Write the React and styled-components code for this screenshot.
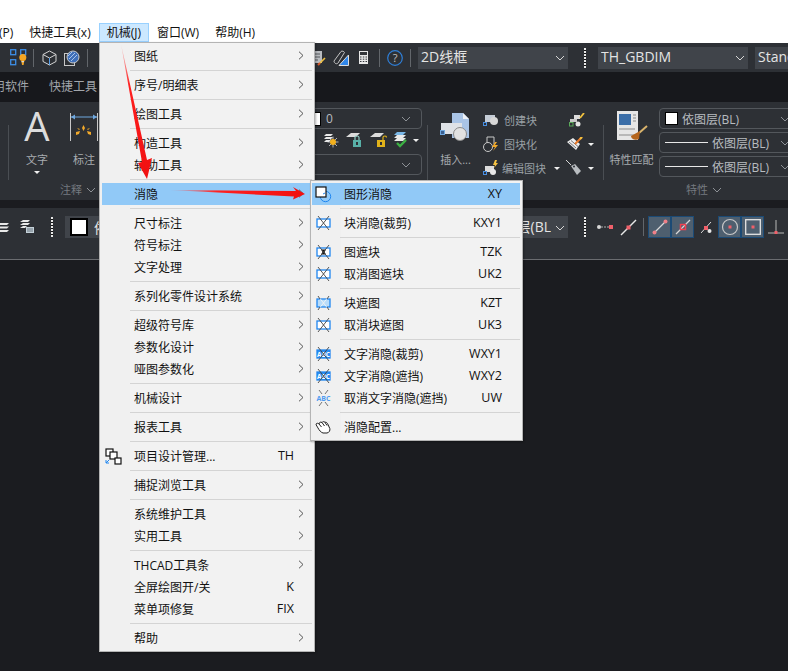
import React from 'react'
import styled, { createGlobalStyle } from 'styled-components'

const GlobalStyle = createGlobalStyle`
  html, body {
    margin: 0;
    padding: 0;
    background: #fff;
  }
  body {
    font-family: "Open Sans", "Noto Sans CJK SC", sans-serif;
    font-size: 12px;
  }
`

const Frame = styled.div`
  position: relative;
  display: flex;
  flex-direction: column;
  width: 788px;
  height: 671px;
  overflow: hidden;
  background: #1b1c20;
`

const MenuBar = styled.div`
  display: flex;
  align-items: flex-end;
  flex: none;
  height: 43px;
  padding-bottom: 1px;
  box-sizing: border-box;
  background: #fff;
`

const MenuTitle = styled.div`
  flex: none;
  height: 19px;
  line-height: 18px;
  padding: 0 7px;
  margin-left: ${props => props.$ml || 0}px;
  box-sizing: border-box;
  color: #111;
  white-space: nowrap;
  border: 1px solid ${props => props.$active ? '#99d1ff' : 'transparent'};
  background: ${props => props.$active ? '#cce8ff' : 'transparent'};
`

const QuickBar = styled.div`
  display: flex;
  align-items: center;
  flex: none;
  height: 29px;
  background: #2d3035;
  overflow: hidden;
`

const Spot = styled.div`
  display: flex;
  align-items: center;
  flex: none;
  margin-left: ${props => props.$ml || 0}px;
`

const ToolSep = styled.div`
  flex: none;
  width: 1px;
  height: 18px;
  margin-left: ${props => props.$ml || 0}px;
  margin-top: ${props => props.$mt || 0}px;
  background: #62666b;
`

const Grip = styled.div`
  flex: none;
  width: 2px;
  height: 20px;
  margin-left: ${props => props.$ml || 0}px;
  margin-top: ${props => props.$mt || 0}px;
  background: repeating-linear-gradient(to bottom, #e8e8e8 0 2px, #111 2px 3px);
`

const DarkCombo = styled.div`
  display: flex;
  align-items: center;
  flex: none;
  width: ${props => props.$w}px;
  height: 22px;
  margin-left: ${props => props.$ml || 0}px;
  padding: 0 0 0 ${props => props.$pl ?? 3}px;
  box-sizing: border-box;
  overflow: hidden;
  background: #40444a;
  color: #e4e4e4;
  font-size: 14px;
  white-space: nowrap;
`

const ComboText = styled.span`
  flex: 1;
  min-width: 0;
  overflow: hidden;
  padding-bottom: 3px;
  text-align: ${props => props.$right ? 'right' : 'left'};
`

const ComboChevron = styled.svg`
  flex: none;
  width: 10px;
  height: 6px;
  margin: 1px ${props => props.$mr ?? 3}px 0 4px;
  fill: none;
  stroke: ${props => props.$dim ? '#8d9196' : '#d8d8d8'};
  stroke-width: 1;
`

const TabBar = styled.div`
  display: flex;
  align-items: center;
  flex: none;
  height: 30px;
  padding-bottom: 2px;
  box-sizing: border-box;
  background: #17181c;
  color: #a2a6ab;
`

const Tab = styled.div`
  flex: none;
  margin-left: ${props => props.$ml || 0}px;
  white-space: nowrap;
`

const Ribbon = styled.div`
  display: flex;
  flex: none;
  height: 98px;
  background: #2d3035;
  overflow: hidden;
`

const Panel = styled.div`
  display: flex;
  flex-direction: column;
  flex: none;
  width: ${props => props.$w}px;
`

const PanelBody = styled.div`
  display: flex;
  flex: none;
  height: 80px;
`

const PanelTitle = styled.div`
  display: flex;
  align-items: center;
  height: 14px;
  margin-left: ${props => props.$ml}px;
  color: #757a80;
  font-size: 11px;
`

const PanelDivider = styled.div`
  flex: none;
  width: 1px;
  height: 55px;
  margin: 23px 0 0 ${props => props.$ml || 0}px;
  background: #4a4e53;
`

const BigTool = styled.div`
  display: flex;
  flex-direction: column;
  align-items: center;
  flex: none;
  width: ${props => props.$w}px;
  color: #a8acb0;
  font-size: 11px;
`

const BigIcon = styled.div`
  display: flex;
  align-items: center;
  justify-content: center;
  height: 50px;
  width: 100%;
`

const BigLabel = styled.div`
  height: 16px;
  line-height: 16px;
  white-space: nowrap;
`

const Caret = styled.span`
  flex: none;
  width: 0;
  height: 0;
  margin-left: ${props => props.$ml || 0}px;
  margin-top: ${props => props.$mt || 0}px;
  border-left: 3px solid transparent;
  border-right: 3px solid transparent;
  border-top: 3px solid #f0f0f0;
`

const ComboStack = styled.div`
  display: flex;
  flex-direction: column;
  flex: none;
  width: ${props => props.$w}px;
  height: 80px;
  padding-top: 6px;
  box-sizing: border-box;
  gap: ${props => props.$gap}px;
`

const OutlineCombo = styled.div`
  display: flex;
  align-items: center;
  flex: none;
  height: 21px;
  margin-top: ${props => props.$mt || 0}px;
  padding-left: ${props => props.$pl}px;
  box-sizing: border-box;
  border: 1px solid #53575c;
  border-radius: 4px;
  color: #b8bcc0;
  white-space: nowrap;
`

const Swatch = styled.span`
  flex: none;
  width: ${props => props.$size}px;
  height: ${props => props.$size}px;
  box-sizing: border-box;
  background: #fff;
  border: ${props => props.$size > 14 ? 2 : 1}px solid #000;
`

const LineSample = styled.span`
  flex: none;
  width: 43px;
  height: 1px;
  margin-right: 4px;
  background: #e8e8e8;
`

const Grow = styled.span`
  flex: 1;
`

const LayerIcons = styled.div`
  display: flex;
  align-items: center;
  height: 20px;
  margin-top: 1px;
  padding-left: 213px;
`

const BlockRows = styled.div`
  display: flex;
  flex-direction: column;
  flex: none;
  width: ${props => props.$w}px;
  padding-top: 6px;
`

const BlockRow = styled.div`
  display: flex;
  align-items: center;
  height: 24px;
  color: #9aa0a6;
  font-size: 11px;
  white-space: nowrap;
`

const BlockLabel = styled.span`
  margin-left: ${props => props.$ml}px;
`

const Band = styled.div`
  flex: none;
  height: 8px;
  background: #1b1c20;
`

const PropBar = styled.div`
  display: flex;
  flex: none;
  align-items: flex-start;
  height: 52px;
  padding-top: 8px;
  box-sizing: border-box;
  background: #2d3035;
  border-bottom: 1px solid #6a6c70;
  overflow: hidden;
`

const PropItem = styled.div`
  display: flex;
  align-items: center;
  flex: none;
  height: 22px;
  margin-left: ${props => props.$ml || 0}px;
`

const SnapGroup = styled.div`
  display: flex;
  flex: none;
  height: 22px;
  margin-left: ${props => props.$ml || 0}px;
  border: 1px solid #1b4a75;
  box-sizing: border-box;
`

const SnapButton = styled.div`
  display: flex;
  align-items: center;
  justify-content: center;
  width: 21px;
  background: #4e5f6f;
  border-left: ${props => props.$joined ? '2px solid #1b4a75' : '0'};
`

const Canvas = styled.div`
  flex: 1;
  background: #1b1c20;
`

const DropMenu = styled.div`
  position: absolute;
  left: ${props => props.$left}px;
  top: ${props => props.$top}px;
  width: ${props => props.$w}px;
  padding: 2px 2px 2px ${props => props.$pl}px;
  box-sizing: border-box;
  border: 1px solid #b4b4b4;
  background: linear-gradient(to right, #f0f0f0 ${props => props.$gutter + 2}px, #f2f2f2 ${props => props.$gutter + 2}px);
  box-shadow: 1px 1px 2px rgba(0, 0, 0, 0.3);
`

const MenuRow = styled.div`
  display: flex;
  align-items: center;
  height: 22px;
  color: #111;
  background: ${props => props.$hot ? '#91c9f7' : 'transparent'};
  white-space: nowrap;
`

const MenuIcon = styled.div`
  display: flex;
  align-items: center;
  justify-content: center;
  flex: none;
  width: ${props => props.$gutter}px;
  padding-right: 6px;
  box-sizing: border-box;
`

const MenuLabel = styled.span`
  flex: 1;
  padding: 0 0 1px 4px;
`

const MenuKey = styled.span`
  flex: none;
  padding-bottom: 1px;
  font-size: 12.5px;
`

const MenuArrow = styled.div`
  display: flex;
  align-items: center;
  flex: none;
  width: 18px;
  padding: 0 0 2px 4px;
  box-sizing: border-box;
`

const MenuSep = styled.div`
  height: 1px;
  margin: 3px 0 3px ${props => props.$gutter}px;
  background: #d4d4d4;
`

const ArrowLayer = styled.svg`
  position: absolute;
  left: 0;
  top: 0;
  width: 788px;
  height: 671px;
  pointer-events: none;
`

const Chevron = ({ mr }) => (
  <ComboChevron viewBox='0 0 10 6' $mr={mr}><path d='M1 1l4 4 4-4' /></ComboChevron>
)

const DimChevron = ({ mr }) => (
  <ComboChevron viewBox='0 0 10 6' $dim $mr={mr}><path d='M1 1l4 4 4-4' /></ComboChevron>
)

const BulbSquares = () => (
  <svg width='17' height='17' viewBox='0 0 17 17'>
    <g fill='none' stroke='#3d8fe8' strokeWidth='1.300'>
      <rect x='.7' y='.7' width='5' height='5' />
      <rect x='10.700' y='.7' width='5' height='5' />
      <rect x='.7' y='10.700' width='5' height='5' />
    </g>
    <circle cx='12.800' cy='8.500' r='3.500' fill='#f5a623' />
    <path d='M11.300 11h3l-.7 5h-1.600z' fill='#f5a623' />
    <rect x='11.500' y='12' width='2.600' height='1.200' fill='#d8d8d8' />
  </svg>
)

const Cube = () => (
  <svg width='15' height='16' viewBox='0 0 15 16' fill='none' stroke='#d4d4d4'>
    <path d='M7.500 1L14 4.500v7L7.500 15 1 11.500v-7z' />
    <path d='M1 4.500l6.500 3.500L14 4.500' />
    <path d='M7.500 8v7' stroke='#5aa0e8' />
  </svg>
)

const HatchDisc = () => (
  <svg width='16' height='16' viewBox='0 0 16 16' fill='none'>
    <rect x='.5' y='3.500' width='10' height='12' stroke='#c8c8c8' />
    <circle cx='9' cy='7' r='6' fill='#3f6fb8' stroke='#c8c8c8' />
    <path d='M5 9l6-6M7 11l6-6M4 6l4-4' stroke='#a9c4ea' />
  </svg>
)

const DocBrush = () => (
  <svg width='13' height='16' viewBox='0 0 13 16'>
    <rect x='0' y='1' width='9' height='12' fill='#b9bcc0' />
    <path d='M2 4h5M2 7h5M2 10h3' stroke='#55585c' />
    <path d='M12 8l-5 5' stroke='#f0c040' strokeWidth='1.600' />
    <path d='M7 13l-2 2' stroke='#d8582a' strokeWidth='2' />
  </svg>
)

const BlueSheet = () => (
  <svg width='16' height='16' viewBox='0 0 16 16'>
    <path d='M15.500 5v10.500H6z' fill='#2f86ea' stroke='#dcdcdc' />
    <path d='M1 11L8 1.500c1-1 3 0 3.500 1L5 13c-1 1.500-4 .5-4-2z' fill='#2d3035' stroke='#c4c4c4' />
  </svg>
)

const Calculator = () => (
  <svg width='9' height='13' viewBox='0 0 9 13'>
    <rect width='9' height='13' fill='#e8e8e8' />
    <rect x='1' y='1' width='7' height='3' fill='#33363a' />
    <path d='M1 6h1.500M3.800 6h1.500M6.500 6H8M1 8.200h1.500M3.800 8.200h1.500M6.500 8.200H8M1 10.500h1.500M3.800 10.500h1.500M6.500 10.500H8' stroke='#33363a' />
  </svg>
)

const HelpCircle = () => (
  <svg width='16' height='16' viewBox='0 0 16 16'>
    <circle cx='8' cy='8' r='7.300' fill='none' stroke='#2f7fd8' strokeWidth='1.200' />
    <text x='8' y='11.800' textAnchor='middle' fontSize='11' fill='#c0c0c0' fontFamily='Open Sans'>?</text>
  </svg>
)

const LetterA = () => (
  <svg width='28' height='30' viewBox='0 0 28 30'>
    <text x='14' y='29' textAnchor='middle' fontSize='40' fill='#dcdcdc' fontFamily='Open Sans'>A</text>
  </svg>
)

const DimIcon = () => (
  <svg width='28' height='30' viewBox='0 0 28 30'>
    <path d='M.5 1v28M27.500 1v28' stroke='#c8c8c8' />
    <path d='M1 5h26' stroke='#6fa8e0' />
    <path d='M1 5l4-2.500v5zM27 5l-4-2.500v5z' fill='#6fa8e0' />
    <path d='M13.500 13l1.500 3-1.500 3-1.500-3zM6 20l4-1-1 3-3 1zM21 20l-4-1 1 3 3 1zM7 16l3 1-1 1zM20 16l-3 1 1 1z' fill='#f2a92a' />
  </svg>
)

const InsertIcon = () => (
  <svg width='32' height='30' viewBox='0 0 32 30'>
    <path d='M12 1h11l6 6v19H12z' fill='#a9c4e6' />
    <path d='M23 1l6 6h-6z' fill='#eef2f8' />
    <path d='M1 11h21v11H1z' fill='#dfe2e6' />
    <circle cx='20' cy='22' r='6.500' fill='#e2e2e2' stroke='#8a8a8a' />
    <rect x='.5' y='18.500' width='4' height='4' fill='#3a5f90' stroke='#6fa8e0' />
  </svg>
)

const SmallBlock = () => (
  <svg width='16' height='14' viewBox='0 0 16 14'>
    <rect x='2' y='2' width='10' height='7' fill='#c4ccd6' />
    <circle cx='11' cy='8' r='4' fill='#d8d8d8' />
    <rect x='.5' y='9.500' width='3' height='3' fill='none' stroke='#4a90e2' />
  </svg>
)

const BlockizeIcon = () => (
  <svg width='16' height='16' viewBox='0 0 16 16'>
    <path d='M4 1h7v7M4 1v6' fill='none' stroke='#c8c8c8' />
    <circle cx='5' cy='11' r='4.500' fill='none' stroke='#c8c8c8' />
    <path d='M12 6l-3 5h3l-2 4 5-6h-3l2-3z' fill='#f2a92a' />
  </svg>
)

const EditBlockIcon = () => (
  <svg width='16' height='16' viewBox='0 0 16 16'>
    <rect x='2' y='6' width='9' height='6' fill='#dcdcdc' />
    <circle cx='10' cy='12' r='3' fill='#e8e8e8' />
    <rect x='.5' y='11.500' width='3' height='3' fill='none' stroke='#4a90e2' />
    <path d='M12 0l-2 5h2l-1 3 4-5h-2l1-3z' fill='#f5c242' />
  </svg>
)

const LinkBlocks = () => (
  <svg width='16' height='14' viewBox='0 0 16 14'>
    <rect x='5' y='2' width='6' height='4' fill='#dcdcdc' />
    <rect x='1' y='6' width='7' height='3' fill='#c8c8c8' />
    <circle cx='9' cy='11' r='2.500' fill='#e4e4e4' />
    <path d='M15 0l-4 5' stroke='#f2c23e' strokeWidth='1.800' />
    <rect x='.5' y='9.500' width='3.500' height='3.500' fill='none' stroke='#5aa85a' />
  </svg>
)

const CheckDoc = () => (
  <svg width='16' height='14' viewBox='0 0 16 14'>
    <path d='M0 5l6-4 7 6-4 6z' fill='#ececec' />
    <path d='M2 5l7 6M4 3.500l7 6' stroke='#55585c' strokeWidth='.8' />
    <path d='M15 0L8 7' stroke='#e8792a' strokeWidth='2' />
    <path d='M15 0l-2 2' stroke='#f2c23e' strokeWidth='2' />
  </svg>
)

const TagIcon = () => (
  <svg width='16' height='16' viewBox='0 0 16 16'>
    <path d='M0 0l5 5' stroke='#d8d8d8' />
    <path d='M5 6l4-2 6 7-4 4z' fill='#b8bcc0' />
    <circle cx='8' cy='6.500' r='1' fill='#2d3035' />
  </svg>
)

const MatchBrush = () => (
  <svg width='32' height='32' viewBox='0 0 32 32'>
    <rect x='1' y='0' width='21' height='29' fill='#e6e6e6' />
    <rect x='3' y='3' width='12' height='11' fill='#3b6ea8' />
    <path d='M17 4h3M17 7h3M17 10h3M3 18h16M3 24h16' stroke='#8a8a8a' />
    <path d='M31 15l-8 7' stroke='#d9b36c' strokeWidth='2' />
    <path d='M24 20l-9 5c0 3 5 5 8 3z' fill='#b5651d' />
  </svg>
)

const LayerSun = () => (
  <svg width='16' height='16' viewBox='0 0 16 16'>
    <path d='M3 2h7l-2 2H1zM3 5h7l-2 2H1zM3 8h5l-2 2H1z' fill='#e8e8e8' />
    <path d='M10 4.500v11M4.500 10h11M6 6l8 8M14 6l-8 8' stroke='#e8e8e8' strokeWidth='.7' />
    <circle cx='10' cy='10' r='3' fill='#f2b01e' />
  </svg>
)

const LayerLock = ({ open }) => (
  <svg width='17' height='16' viewBox='0 0 17 16'>
    <path d='M5 1h9l-4 4H0z' fill='#dcdcdc' />
    <rect x='7' y='8' width='8' height='7' fill={open ? '#e0b21a' : '#58b0a8'} />
    <rect x='10' y='10' width='2' height='3' fill='#2d3035' />
    <path d={open ? 'M13 8V5.500c0-2 3.500-2 3.500 0' : 'M9 8V5.500c0-2 4-2 4 0V8'} fill='none' stroke={open ? '#e0b21a' : '#8cc8c0'} strokeWidth='1.200' />
  </svg>
)

const LayerCheck = () => (
  <svg width='15' height='16' viewBox='0 0 15 16'>
    <path d='M4 0h9l-3 3H1z' fill='#7ab8e8' />
    <path d='M4 3h9l-3 3H1zM4 6h9l-3 3H1z' fill='#e8e8e8' />
    <path d='M4 11l3 3 6-6' fill='none' stroke='#3cb043' strokeWidth='2.400' />
  </svg>
)

const PropStub = () => (
  <svg width='9' height='14' viewBox='0 0 9 14'>
    <path d='M0 3h9l-2 2H0zM0 6.500h9l-2 2H0zM0 10h9l-2 2H0z' fill='#e8e8e8' />
  </svg>
)

const LayerSheet = () => (
  <svg width='14' height='14' viewBox='0 0 14 14'>
    <path d='M3 0h7L8 2H0zM3 3h7L8 5H0zM3 6h4L5 8H0z' fill='#e8e8e8' />
    <rect x='6' y='7' width='8' height='6' fill='#c4d0d8' />
    <path d='M7 9h6M7 11h6' stroke='#6b7780' />
  </svg>
)

const Red = ({ x, y, s = 3 }) => <rect x={x - s / 2} y={y - s / 2} width={s} height={s} fill='#f0606a' />

const SnapIcon = ({ kind }) => {
  if (kind === 'endpoint') {
    return (
      <svg width='16' height='16' viewBox='0 0 16 16'>
        <path d='M2 14L14 2' stroke='#d8d8d8' strokeWidth='1.200' />
        <circle cx='2.500' cy='13.500' r='2' fill='#f08088' />
        <circle cx='13.500' cy='2.500' r='2' fill='#f08088' />
      </svg>
    )
  }
  if (kind === 'mid') {
    return (
      <svg width='16' height='16' viewBox='0 0 16 16'>
        <path d='M1 15L15 1' stroke='#d8d8d8' strokeWidth='1.200' />
        <rect x='5.500' y='5.500' width='5' height='5' fill='none' stroke='#f04050' strokeWidth='1.500' />
      </svg>
    )
  }
  if (kind === 'extend') {
    return (
      <svg width='16' height='6' viewBox='0 0 16 6'>
        <circle cx='2' cy='3' r='2' fill='#d8d8d8' />
        <path d='M4 3h8' stroke='#b0b0b0' strokeDasharray='2 1' />
        <Red x={14} y={3} s={4} />
      </svg>
    )
  }
  if (kind === 'line') {
    return (
      <svg width='17' height='17' viewBox='0 0 17 17'>
        <path d='M1 16L16 1' stroke='#e8e8e8' strokeWidth='1.500' />
        <Red x={8.500} y={8.500} s={4} />
      </svg>
    )
  }
  if (kind === 'near') {
    return (
      <svg width='11' height='13' viewBox='0 0 11 13'>
        <path d='M0 12L10 1' stroke='#d8d8d8' />
        <Red x={5} y={7} s={4} />
        <circle cx='8.500' cy='10' r='2' fill='#e8e8e8' />
      </svg>
    )
  }
  if (kind === 'circle') {
    return (
      <svg width='18' height='18' viewBox='0 0 18 18'>
        <circle cx='9' cy='9' r='7.500' fill='none' stroke='#c8c8c8' strokeWidth='1.200' />
        <Red x={9} y={9} />
      </svg>
    )
  }
  if (kind === 'square') {
    return (
      <svg width='16' height='16' viewBox='0 0 16 16'>
        <rect x='.7' y='.7' width='14.600' height='14.600' fill='none' stroke='#e4e4e4' strokeWidth='1.300' />
        <Red x={8} y={8} />
      </svg>
    )
  }
  return (
    <svg width='16' height='15' viewBox='0 0 16 15'>
      <path d='M8 0v13M0 13h16' stroke='#b8b8b8' />
      <Red x={8} y={12.500} s={3} />
    </svg>
  )
}

const CrossIcon = ({ kind }) => (
  <svg width='15' height='16' viewBox='0 0 15 16'>
    <rect x='1' y='4' width='13' height='8' fill={kind === 'light' ? '#b8dcfa' : kind === 'text' ? '#2c8cf0' : '#fff'} stroke='#1f86f0' strokeWidth='1.300' />
    {kind === 'solid' && <path d='M5 5.500h5L8.500 8 10 10.500H5L6.500 8z' fill='#111' />}
    {kind === 'text' && (
      <text x='7.500' y='10.600' textAnchor='middle' fontSize='6.500' fontWeight='700' fill='#fff' fontFamily='Open Sans'>ABC</text>
    )}
    <path d='M2 1l11 14M13 1L2 15' stroke={kind === 'light' ? '#f4f4f4' : '#444'} strokeWidth='.9' />
    {kind === 'light' && <path d='M2 1l2 3M13 1l-2 3M2 15l2-3M13 15l-2-3' stroke='#444' strokeWidth='.9' />}
  </svg>
)

const ShapeHideIcon = () => (
  <svg width='17' height='17' viewBox='0 0 17 17'>
    <circle cx='10.500' cy='10.500' r='5.200' fill='none' stroke='#1f86f0' />
    <rect x='1' y='1' width='10' height='10' fill='#fff' stroke='#111' strokeWidth='1.200' />
    <path d='M8 8l2-1' stroke='#1f86f0' />
  </svg>
)

const TextHideIcon = () => (
  <svg width='15' height='16' viewBox='0 0 15 16'>
    <path d='M3 0l3 4M12 0L9 4M3 16l3-4M12 16l-3-4' stroke='#666' strokeWidth='.9' />
    <text x='7.500' y='10.500' textAnchor='middle' fontSize='7' fontWeight='700' fill='#4f9cf0' fontFamily='Open Sans'>ABC</text>
  </svg>
)

const HandIcon = () => (
  <svg width='16' height='14' viewBox='0 0 16 14'>
    <path d='M1 4c1-1 2-1 3 0 0-1.500 1.500-2.500 3-1.500 .5-1 2-1.200 3-.2 1-.3 2 .3 2.500 1.200l2.300 5c.5 2-.5 4-2.800 4.500H8C6 12.500 4 10 3 8 2.500 7 1 5 1 4z' fill='#fff' stroke='#222' />
    <path d='M4 4l2.500 3M7 2.500l2.500 3.500M10 2.300l2 3.200' stroke='#222' fill='none' />
  </svg>
)

const ProjectIcon = () => (
  <svg width='17' height='17' viewBox='0 0 17 17' fill='#fff' stroke='#111' strokeWidth='1.200'>
    <rect x='1' y='1' width='7' height='7' />
    <rect x='5' y='4' width='7' height='7' />
    <rect x='10' y='10' width='6' height='6' />
    <path d='M1 12v3h3M1 15l3-3' fill='none' stroke='#1f86f0' strokeWidth='1' />
  </svg>
)

const ArrowGlyph = () => (
  <svg width='6' height='9' viewBox='0 0 6 9' fill='none' stroke='#555'>
    <path d='M1 .7l4 3.800-4 3.800' />
  </svg>
)

const mainMenu = [
  { label: '图纸', sub: true }, null,
  { label: '序号/明细表', sub: true }, null,
  { label: '绘图工具', sub: true }, null,
  { label: '构造工具', sub: true },
  { label: '辅助工具', sub: true }, null,
  { label: '消隐', sub: true, hot: true }, null,
  { label: '尺寸标注', sub: true },
  { label: '符号标注', sub: true },
  { label: '文字处理', sub: true }, null,
  { label: '系列化零件设计系统', sub: true }, null,
  { label: '超级符号库', sub: true },
  { label: '参数化设计', sub: true },
  { label: '哑图参数化', sub: true }, null,
  { label: '机械设计', sub: true }, null,
  { label: '报表工具', sub: true }, null,
  { label: '项目设计管理...', shortcut: 'TH', icon: <ProjectIcon /> }, null,
  { label: '捕捉浏览工具', sub: true }, null,
  { label: '系统维护工具', sub: true },
  { label: '实用工具', sub: true }, null,
  { label: 'THCAD工具条', sub: true },
  { label: '全屏绘图开/关', shortcut: 'K' },
  { label: '菜单项修复', shortcut: 'FIX' }, null,
  { label: '帮助', sub: true }
]

const hideMenu = [
  { label: '图形消隐', shortcut: 'XY', hot: true, icon: <ShapeHideIcon /> }, null,
  { label: '块消隐(裁剪)', shortcut: 'KXY1', icon: <CrossIcon kind='white' /> }, null,
  { label: '图遮块', shortcut: 'TZK', icon: <CrossIcon kind='solid' /> },
  { label: '取消图遮块', shortcut: 'UK2', icon: <CrossIcon kind='white' /> }, null,
  { label: '块遮图', shortcut: 'KZT', icon: <CrossIcon kind='light' /> },
  { label: '取消块遮图', shortcut: 'UK3', icon: <CrossIcon kind='white' /> }, null,
  { label: '文字消隐(裁剪)', shortcut: 'WXY1', icon: <CrossIcon kind='text' /> },
  { label: '文字消隐(遮挡)', shortcut: 'WXY2', icon: <CrossIcon kind='text' /> },
  { label: '取消文字消隐(遮挡)', shortcut: 'UW', icon: <TextHideIcon /> }, null,
  { label: '消隐配置...', icon: <HandIcon /> }
]

const MenuList = ({ items, gutter }) => items.map((item, i) => item === null
  ? <MenuSep key={i} $gutter={gutter} />
  : (
    <MenuRow key={i} $hot={item.hot}>
      <MenuIcon $gutter={gutter}>{item.icon}</MenuIcon>
      <MenuLabel>{item.label}</MenuLabel>
      <MenuKey>{item.shortcut}</MenuKey>
      <MenuArrow>{item.sub && <ArrowGlyph />}</MenuArrow>
    </MenuRow>
  ))

const App = () => (
  <Frame>
    <GlobalStyle />
    <MenuBar>
      <MenuTitle $ml={-33}>标注(P)</MenuTitle>
      <MenuTitle>快捷工具(x)</MenuTitle>
      <MenuTitle $active>机械(J)</MenuTitle>
      <MenuTitle>窗口(W)</MenuTitle>
      <MenuTitle>帮助(H)</MenuTitle>
    </MenuBar>

    <QuickBar>
      <Spot $ml={10}><BulbSquares /></Spot>
      <ToolSep $ml={6} />
      <Spot $ml={8}><Cube /></Spot>
      <Spot $ml={7}><HatchDisc /></Spot>
      <ToolSep $ml={7} />
      <Spot $ml={225}><DocBrush /></Spot>
      <Spot $ml={7}><BlueSheet /></Spot>
      <Spot $ml={10}><Calculator /></Spot>
      <ToolSep $ml={11} />
      <Spot $ml={7}><HelpCircle /></Spot>
      <ToolSep $ml={7} />
      <DarkCombo $ml={7} $w={150}><ComboText>2D线框</ComboText><Chevron /></DarkCombo>
      <Grip $ml={16} />
      <DarkCombo $ml={12} $w={150}><ComboText>TH_GBDIM</ComboText><Chevron /></DarkCombo>
      <DarkCombo $ml={7} $w={80}><ComboText>Standard</ComboText></DarkCombo>
    </QuickBar>

    <TabBar>
      <Tab $ml={-19}>应用软件</Tab>
      <Tab $ml={20}>快捷工具</Tab>
    </TabBar>

    <Ribbon>
      <Panel $w={110}>
        <PanelBody>
          <PanelDivider $ml={8} />
          <BigTool $w={56}>
            <BigIcon><LetterA /></BigIcon>
            <BigLabel>文字</BigLabel>
            <Caret $mt={3} />
          </BigTool>
          <BigTool $w={38}>
            <BigIcon><DimIcon /></BigIcon>
            <BigLabel>标注</BigLabel>
          </BigTool>
        </PanelBody>
        <PanelTitle $ml={60}>注释<DimChevron /></PanelTitle>
      </Panel>

      <Panel $w={312}>
        <ComboStack $w={312} $gap={0}>
          <OutlineCombo $pl={196}>
            <Swatch $size={14} />
            <BlockLabel $ml={5}>0</BlockLabel>
            <Grow />
            <DimChevron mr={10} />
          </OutlineCombo>
          <LayerIcons>
            <LayerSun />
            <Spot $ml={7}><LayerLock /></Spot>
            <Spot $ml={7}><LayerLock open /></Spot>
            <Spot $ml={6}><LayerCheck /></Spot>
            <Caret $ml={5} />
          </LayerIcons>
          <OutlineCombo $pl={196} $mt={4}>
            <Grow />
            <DimChevron mr={10} />
          </OutlineCombo>
        </ComboStack>
      </Panel>

      <PanelDivider $ml={5} />

      <BigTool $w={55}>
        <BigIcon><InsertIcon /></BigIcon>
        <BigLabel>插入...</BigLabel>
      </BigTool>

      <BlockRows $w={78}>
        <BlockRow><SmallBlock /><BlockLabel $ml={5}>创建块</BlockLabel></BlockRow>
        <BlockRow><BlockizeIcon /><BlockLabel $ml={5}>图块化</BlockLabel></BlockRow>
        <BlockRow><EditBlockIcon /><BlockLabel $ml={3}>编辑图块</BlockLabel><Caret $ml={8} /></BlockRow>
      </BlockRows>

      <BlockRows $w={42}>
        <BlockRow><Spot $ml={8}><LinkBlocks /></Spot></BlockRow>
        <BlockRow><Spot $ml={6}><CheckDoc /></Spot><Caret $ml={5} /></BlockRow>
        <BlockRow><Spot $ml={5}><TagIcon /></Spot><Caret $ml={6} /></BlockRow>
      </BlockRows>

      <PanelDivider />

      <BigTool $w={55}>
        <BigIcon><MatchBrush /></BigIcon>
        <BigLabel>特性匹配</BigLabel>
      </BigTool>

      <Panel $w={150}>
        <ComboStack $w={150} $gap={3}>
          <OutlineCombo $pl={5}>
            <Swatch $size={13} />
            <BlockLabel $ml={4}>依图层(BL)</BlockLabel>
            <Grow />
            <DimChevron mr={18} />
          </OutlineCombo>
          <OutlineCombo $pl={5}>
            <LineSample />
            <BlockLabel $ml={0}>依图层(BL)</BlockLabel>
            <Grow />
            <DimChevron mr={18} />
          </OutlineCombo>
          <OutlineCombo $pl={5}>
            <LineSample />
            <BlockLabel $ml={0}>依图层(BL)</BlockLabel>
            <Grow />
            <DimChevron mr={18} />
          </OutlineCombo>
        </ComboStack>
        <PanelTitle $ml={27}>特性<DimChevron /></PanelTitle>
      </Panel>
    </Ribbon>

    <Band />

    <PropBar>
      <PropItem><PropStub /></PropItem>
      <PropItem $ml={11}><LayerSheet /></PropItem>
      <Grip $ml={17} $mt={1} />
      <DarkCombo $ml={12} $w={60} $pl={5}>
        <Swatch $size={18} />
        <BlockLabel $ml={6}>依图层</BlockLabel>
      </DarkCombo>
      <DarkCombo $ml={276} $w={167}>
        <ComboText $right>层(BL</ComboText>
        <Chevron />
      </DarkCombo>
      <Grip $ml={16} $mt={1} />
      <PropItem $ml={11}><SnapIcon kind='extend' /></PropItem>
      <PropItem $ml={7}><SnapIcon kind='line' /></PropItem>
      <ToolSep $ml={6} $mt={2} />
      <SnapGroup $ml={4}>
        <SnapButton><SnapIcon kind='endpoint' /></SnapButton>
        <SnapButton $joined><SnapIcon kind='mid' /></SnapButton>
      </SnapGroup>
      <PropItem $ml={7}><SnapIcon kind='near' /></PropItem>
      <SnapGroup $ml={6}>
        <SnapButton><SnapIcon kind='circle' /></SnapButton>
        <SnapButton $joined><SnapIcon kind='square' /></SnapButton>
      </SnapGroup>
      <PropItem $ml={4}><SnapIcon kind='perp' /></PropItem>
    </PropBar>

    <Canvas />

    <DropMenu $left={99} $top={42} $w={216} $pl={2} $gutter={28}>
      <MenuList items={mainMenu} gutter={28} />
    </DropMenu>

    <DropMenu $left={310} $top={180} $w={213} $pl={1} $gutter={28}>
      <MenuList items={hideMenu} gutter={28} />
    </DropMenu>

    <ArrowLayer viewBox='0 0 788 671'>
      <defs>
        <linearGradient id='downFade' x1='0' y1='0' x2='0' y2='1'>
          <stop offset='0' stopColor='#ff3030' stopOpacity='0.1' />
          <stop offset='0.3' stopColor='#ff2020' />
          <stop offset='1' stopColor='#f01010' />
        </linearGradient>
        <linearGradient id='sideFade' x1='0' y1='0' x2='1' y2='0'>
          <stop offset='0' stopColor='#ff5050' stopOpacity='0.15' />
          <stop offset='0.35' stopColor='#ff2020' />
          <stop offset='1' stopColor='#f01010' />
        </linearGradient>
      </defs>
      <polygon points='121,44 147,160 152,158 147,179 138,163 142,162' fill='url(#downFade)' />
      <polygon points='170,190 296,191 293,187 305,194 293,199.500 294,196.500' fill='url(#sideFade)' />
    </ArrowLayer>
  </Frame>
)

export default App
